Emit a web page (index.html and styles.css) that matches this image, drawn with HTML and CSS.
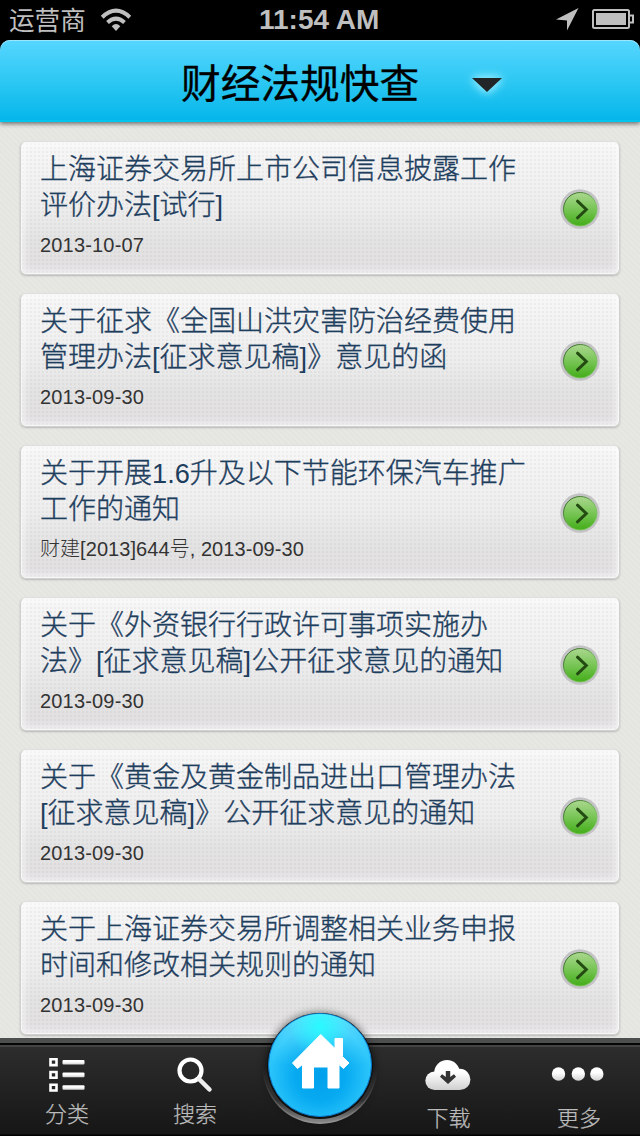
FILE: index.html
```html
<!DOCTYPE html>
<html lang="zh-CN">
<head>
<meta charset="utf-8">
<title>财经法规快查</title>
<link rel="stylesheet" href="styles.css">
</head>
<body>
<svg class="defs" width="0" height="0" aria-hidden="true">
  <defs>
    <linearGradient id="green" x1="0" y1="0" x2="0" y2="1"><stop offset="0" stop-color="#abd78f"/><stop offset=".5" stop-color="#78c556"/><stop offset="1" stop-color="#43ad18"/></linearGradient>
    <linearGradient id="rim" x1="0" y1="0" x2="1" y2="1"><stop offset="0" stop-color="#2f5b22"/><stop offset=".4" stop-color="#5c9a45"/><stop offset=".65" stop-color="#79c35a"/></linearGradient>
    <linearGradient id="silver" x1="0" y1="0" x2="0" y2="1"><stop offset=".4" stop-color="#fff"/><stop offset="1" stop-color="#d2d2d2"/></linearGradient>
    <symbol id="go" viewBox="0 0 40 40">
      <circle cx="20" cy="20" r="19.7" fill="#c3c3c5"/>
      <circle cx="20.2" cy="20.2" r="16.7" fill="url(#green)" stroke="url(#rim)" stroke-width="1"/>
      <path d="M17.500 12.200 26.300 20.500 17.500 28.800" fill="none" stroke="#244c12" stroke-width="3" stroke-linecap="round"/>
    </symbol>
  </defs>
</svg>
<div class="screen">
  <div class="status">
    <span class="carrier">运营商</span>
    <svg class="wifi" width="32" height="24" viewBox="0 0 32 24"><g fill="none" stroke="#bfbfbf" stroke-width="4"><path d="M2.2 9.2Q16-3.8 29.8 9.2"/><path d="M7.500 14.500Q16 6.800 24.500 14.500"/></g><path d="M11.700 18.300Q16 13.600 20.300 18.300L16 23z" fill="#bfbfbf"/></svg>
    <span class="clock">11:54 AM</span>
    <svg class="location" width="24" height="24" viewBox="0 0 24 24"><path d="M22.500 0 11 22.500V12.500L0 11.500z" fill="#bfbfbf"/></svg>
    <svg class="battery" width="42" height="20" viewBox="0 0 42 20"><rect x="1" y="1" width="36" height="18" rx="1.5" fill="none" stroke="#bfbfbf" stroke-width="2"/><path d="M4 4h30v12H4z" fill="#bfbfbf"/><path d="M38 6.5h3v7h-3" fill="none" stroke="#bfbfbf" stroke-width="2"/></svg>
  </div>
  <header class="header">
    <h1 class="title">财经法规快查</h1>
    <svg class="caret" width="30" height="14" viewBox="0 0 30 14"><path d="M0 0h30L15 14z" fill="#222628"/></svg>
  </header>
  <main class="list">
    <article class="card"><div class="text"><h2 class="name">上海证券交易所上市公司信息披露工作<br>评价办法<span class="latin">[</span>试行<span class="latin">]</span></h2><p class="meta">2013-10-07</p></div><svg class="go"><use href="#go"/></svg></article>
    <article class="card"><div class="text"><h2 class="name">关于征求《全国山洪灾害防治经费使用<br>管理办法<span class="latin">[</span>征求意见稿<span class="latin">]</span>》意见的函</h2><p class="meta">2013-09-30</p></div><svg class="go"><use href="#go"/></svg></article>
    <article class="card"><div class="text"><h2 class="name">关于开展<span class="latin">1.6</span>升及以下节能环保汽车推广<br>工作的通知</h2><p class="meta tight">财建[2013]644号, 2013-09-30</p></div><svg class="go"><use href="#go"/></svg></article>
    <article class="card"><div class="text"><h2 class="name">关于《外资银行行政许可事项实施办<br>法》<span class="latin">[</span>征求意见稿<span class="latin">]</span>公开征求意见的通知</h2><p class="meta">2013-09-30</p></div><svg class="go"><use href="#go"/></svg></article>
    <article class="card"><div class="text"><h2 class="name">关于《黄金及黄金制品进出口管理办法<br><span class="latin">[</span>征求意见稿<span class="latin">]</span>》公开征求意见的通知</h2><p class="meta">2013-09-30</p></div><svg class="go"><use href="#go"/></svg></article>
    <article class="card"><div class="text"><h2 class="name">关于上海证券交易所调整相关业务申报<br>时间和修改相关规则的通知</h2><p class="meta">2013-09-30</p></div><svg class="go"><use href="#go"/></svg></article>
  </main>
  <nav class="tabs">
    <a class="tab tab-category"><svg width="36" height="36" viewBox="0 0 36 36"><g fill="none" stroke="#fff" stroke-width="2.6"><path d="M1.500 2.300h6v5.800h-6zM1.500 15h6v5.800h-6zM1.500 27.700h6v5.800h-6z"/></g><g fill="url(#silver)"><rect x="13.500" y="3" width="22" height="4.600" rx="1"/><rect x="13.500" y="15.600" width="22" height="4.600" rx="1"/><rect x="13.500" y="28.200" width="22" height="4.600" rx="1"/></g></svg><span>分类</span></a>
    <a class="tab tab-search"><svg width="36" height="36" viewBox="0 0 36 36"><circle cx="13.500" cy="13.500" r="11" fill="none" stroke="#fff" stroke-width="4.200"/><path d="M22 22 32.500 32.500" stroke="#eee" stroke-width="4.500" stroke-linecap="round"/></svg><span>搜索</span></a>
    <a class="tab tab-home" aria-label="首页"><svg class="home" width="128" height="136" viewBox="0 0 128 136">
      <defs>
        <radialGradient id="ball" cx=".5" cy=".6" r=".58"><stop offset="0" stop-color="#02a0ec"/><stop offset=".42" stop-color="#07aaf1"/><stop offset=".85" stop-color="#2bc5fb"/><stop offset="1" stop-color="#1bb5f5"/></radialGradient>
        <radialGradient id="shine" cx=".5" cy=".12" r=".3"><stop offset="0" stop-color="#2afaff"/><stop offset="1" stop-color="#2afaff" stop-opacity="0"/></radialGradient>
        <linearGradient id="top" x1="0" y1="0" x2="0" y2="1"><stop offset="0" stop-color="#7cecff" stop-opacity=".8"/><stop offset=".5" stop-color="#4ad5ff" stop-opacity="0"/></linearGradient>
        <linearGradient id="dish" x1="0" y1="0" x2="0" y2="1"><stop offset=".5" stop-color="#333" stop-opacity="0"/><stop offset=".75" stop-color="#444"/><stop offset="1" stop-color="#999"/></linearGradient>
        <linearGradient id="well" x1="0" y1="0" x2="0" y2="1"><stop offset=".5" stop-color="#1c1c1c" stop-opacity="0"/><stop offset=".8" stop-color="#303030"/><stop offset="1" stop-color="#888"/></linearGradient>
        <filter id="soft" x="-20%" y="-20%" width="140%" height="140%"><feGaussianBlur stdDeviation="4"/></filter>
      </defs>
      <circle cx="64" cy="67" r="54" fill="#000" opacity=".55" filter="url(#soft)"/>
      <circle cx="64" cy="66.500" r="57.500" fill="url(#dish)"/>
      <circle cx="64" cy="66.500" r="56" fill="url(#well)"/>
      <circle cx="64" cy="66" r="53" fill="#111"/>
      <circle cx="64" cy="65" r="51.500" fill="url(#ball)" stroke="#0879ca" stroke-width="1"/>
      <circle cx="64" cy="65" r="51" fill="url(#top)"/>
      <circle cx="64" cy="65" r="51" fill="url(#shine)"/>
      <path d="M64.700 34.500 79 48.500V38.500h7.500V56.500L93 63 87.500 68.500 83 64.500V88H72V67H57.500V88H46.500V64.500L41.500 68.500 36.500 63z" fill="#fff" stroke="#fff" stroke-width="1" stroke-linejoin="round"/>
    </svg></a>
    <a class="tab tab-download"><svg width="46" height="32" viewBox="0 0 46 32">
      <defs>
        <linearGradient id="cloud" gradientUnits="userSpaceOnUse" x1="0" y1="1" x2="0" y2="31"><stop offset=".4" stop-color="#fff"/><stop offset="1" stop-color="#cfcfcf"/></linearGradient>
      </defs>
      <g fill="url(#cloud)"><circle cx="9.500" cy="21.800" r="9.200"/><circle cx="22" cy="13.800" r="12.800"/><circle cx="34.800" cy="20.400" r="10.600"/><path d="M9.500 16h25.300v15H9.500z"/></g>
      <path d="M20.800 12h4.400v6l3.800-2.800 2 2.500-8 7.300-8-7.300 2-2.500 3.800 2.800z" fill="#333"/></svg><span>下载</span></a>
    <a class="tab tab-more"><svg width="54" height="16" viewBox="0 0 54 16"><g fill="url(#silver)"><circle cx="7.500" cy="8" r="6.700"/><circle cx="27.300" cy="8" r="6.700"/><circle cx="45.800" cy="8" r="6.700"/></g></svg><span>更多</span></a>
  </nav>
</div>
</body>
</html>
```
FILE: styles.css
```css
* { box-sizing: border-box; }

body {
  margin: 0;
  background: #000;
  font-family: "Liberation Sans", "Noto Sans CJK SC", sans-serif;
}

.defs { position: absolute; }

.screen {
  display: flex;
  flex-direction: column;
  width: 640px;
  height: 1136px;
  overflow: hidden;
}

.status {
  display: grid;
  grid-template-columns: 100px 159px 297px 36px 48px;
  height: 40px;
  color: #bfbfbf;
}

.carrier { padding-left: 9px; font-size: 25.600px; line-height: 42px; white-space: nowrap; }
.clock { font-size: 28px; line-height: 40px; font-weight: bold; }
.wifi, .location { margin-top: 8px; }
.battery { margin-top: 9px; }

.header {
  position: relative;
  z-index: 1;
  display: flex;
  align-items: center;
  flex: none;
  height: 82px;
  padding-left: 181px;
  border-radius: 10px 10px 0 0;
  background: linear-gradient(#56d6ff, #2dc8f3 50%, #03b5ea);
  box-shadow: 0 2px 4px rgba(0, 0, 0, .5), inset 0 1px #9ce6fc, inset 0 -2px #00c5ef;
}

.title { margin: 6px 0 0; width: 291px; font-size: 39.700px; line-height: 60px; font-weight: 400; -webkit-text-stroke: .3px #000; }
.caret { margin-top: 7px; overflow: visible; filter: drop-shadow(0 0 4px #8ae8ff) drop-shadow(0 0 4px #8ae8ff); }

.list {
  display: flex;
  flex-direction: column;
  gap: 18px;
  flex: none;
  height: 916px;
  padding: 19px 20px 0;
  overflow: hidden;
  background: repeating-linear-gradient(45deg, #e7e8e4 0 2px, #e4e5e1 2px 4px);
}

.card {
  display: flex;
  justify-content: space-between;
  flex: none;
  height: 134px;
  padding: 10px 20px 0;
  border: 1px solid #d0d0d0;
  border-top-color: #e0e0e0;
  border-radius: 6px;
  background:
    radial-gradient(circle at 2px 2px, rgba(0, 0, 0, .05) .6px, transparent 1.100px) 0 0 / 4px 4px,
    linear-gradient(#f8f7f7, #eeedee 50%, #e4e3e3 75%, #e2e0e2);
  box-shadow: inset 0 0 0 1px #f7f7f7, inset 0 0 8px 2px rgba(255, 255, 255, .75), 0 1px 2px rgba(0, 0, 0, .2);
}

.text { margin-left: -1px; }
.name {
  margin: 0;
  color: #1e3e5e;
  font-size: 28px;
  line-height: 36px;
  font-weight: 300;
  white-space: nowrap;
  -webkit-text-stroke: .35px #1e3e5e;
}
.latin { font-size: 27.200px; -webkit-text-stroke: 0; }
.meta { margin: 9px 0 0; color: #333; font-size: 20px; line-height: 24px; font-weight: 300; letter-spacing: .18px; }
.tight { letter-spacing: .06px; }
.go { flex: none; width: 40px; height: 40px; margin: 37px -1px 0 0; }

.tabs {
  position: relative;
  z-index: 2;
  display: grid;
  grid-template-columns: 134px 122px 128px 127px 129px;
  flex: none;
  height: 98px;
  border-top: 5px solid #4d4e4e;
  background: linear-gradient(#050505 0 2px, #444 2px 4px, #2d2d2d 4px, #161616 91px, #000 92px);
}

.tab {
  display: flex;
  flex-direction: column;
  align-items: center;
  color: #bbb;
  font-size: 22px;
  line-height: 28px;
  font-weight: 300;
  -webkit-text-stroke: .25px #bbb;
}
.tab svg { flex: none; }
.tab-category, .tab-search { padding-top: 14px; gap: 8px; }
.tab-home svg { margin-top: -43px; }
.tab-download { padding-top: 16px; gap: 14px; }
.tab-download span { padding-left: 2px; }
.tab-more { padding: 23px 0 0 7px; gap: 23px; }
.tab-more svg { margin-right: 2px; }
```
